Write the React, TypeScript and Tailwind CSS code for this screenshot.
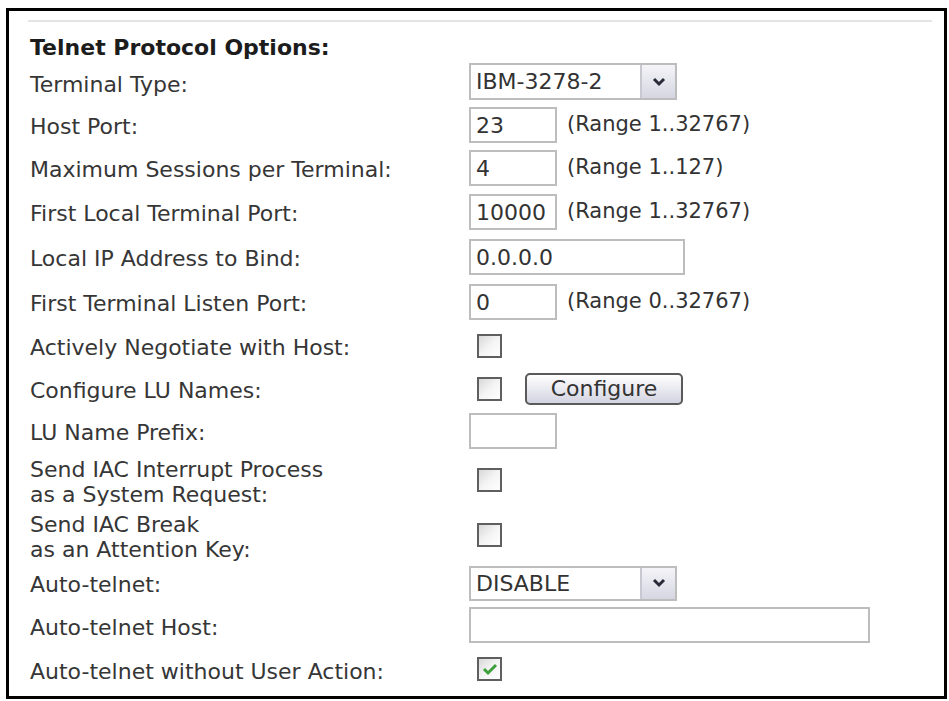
import React from 'react';

function Row({ h, label, children }: { h: string; label: React.ReactNode; children?: React.ReactNode }) {
  return (
    <div className={`flex items-center ${h}`}>
      <div className="w-[439px] shrink-0 pt-[3px] leading-[22px]">{label}</div>
      <div className="flex items-center">{children}</div>
    </div>
  );
}

function TwoLine({ a, b }: { a: string; b: string }) {
  return (
    <div className="leading-[25px]">
      <div>{a}</div>
      <div>{b}</div>
    </div>
  );
}

function TextBox({ w, value }: { w: string; value?: string }) {
  return (
    <div className={`${w} h-[36px] border-2 border-[#bdbdbd] bg-white px-[5px] flex items-center text-[22px] text-[#333]`}>
      {value}
    </div>
  );
}

function Range({ text }: { text: string }) {
  return <span className="ml-[10px] text-[21px] text-[#333]">{text}</span>;
}

function Select({ value, h }: { value: string; h: string }) {
  return (
    <div className={`w-[208px] ${h} border-2 border-[#bdbdbd] bg-white flex items-stretch`}>
      <div className="flex-1 flex items-center pl-[5px] text-[22px] text-[#333]">{value}</div>
      <div className="w-[35px] border-l-2 border-[#c8c8d0] bg-gradient-to-b from-[#f4f4f8] to-[#d6d6e2] flex items-center justify-center">
        <svg width="14" height="10" viewBox="0 0 14 10">
          <path d="M2 2 L7 7 L12 2" fill="none" stroke="#2a2a3a" strokeWidth="3" />
        </svg>
      </div>
    </div>
  );
}

function Check({ checked }: { checked?: boolean }) {
  return (
    <div className="ml-[8px] w-[25px] h-[24px] border-2 border-[#5f5f5f] bg-gradient-to-br from-[#d8d8d8] via-[#f4f4f4] to-white flex items-center justify-center">
      {checked && (
        <svg width="16" height="14" viewBox="0 0 16 14">
          <path d="M2 7 L6 11 L14 3" fill="none" stroke="#3da03d" strokeWidth="3" />
        </svg>
      )}
    </div>
  );
}

export default function App() {
  return (
    <div className="min-h-screen bg-white pt-[8px] pl-[6px] font-['DejaVu_Sans',sans-serif] text-[22px] text-[#363636]">
      <div className="w-[941px] h-[691px] border-[3px] border-black bg-white pl-[21px] pt-[9px]">
        <div className="ml-[-2px] w-[904px] h-[2px] bg-[#e4e4e4]" />
        <div className="mt-[13px] h-[25px] leading-[25px] font-bold text-[22px] text-[#1c1c1c]">
          Telnet Protocol Options:
        </div>
        <div className="mt-[2px]">
          <Row h="h-[42px]" label="Terminal Type:">
            <div className="-mt-[3px]">
              <Select value="IBM-3278-2" h="h-[37px]" />
            </div>
          </Row>
          <Row h="h-[42px]" label="Host Port:">
            <TextBox w="w-[88px]" value="23" />
            <Range text="(Range 1..32767)" />
          </Row>
          <Row h="h-[44px]" label="Maximum Sessions per Terminal:">
            <TextBox w="w-[88px]" value="4" />
            <Range text="(Range 1..127)" />
          </Row>
          <Row h="h-[44px]" label="First Local Terminal Port:">
            <TextBox w="w-[88px]" value="10000" />
            <Range text="(Range 1..32767)" />
          </Row>
          <Row h="h-[46px]" label="Local IP Address to Bind:">
            <TextBox w="w-[216px]" value="0.0.0.0" />
          </Row>
          <Row h="h-[44px]" label="First Terminal Listen Port:">
            <TextBox w="w-[88px]" value="0" />
            <Range text="(Range 0..32767)" />
          </Row>
          <Row h="h-[44px]" label="Actively Negotiate with Host:">
            <Check />
          </Row>
          <Row h="h-[42px]" label="Configure LU Names:">
            <Check />
            <button className="ml-[23px] w-[158px] h-[32px] border-2 border-[#5a5a5a] rounded-[5px] bg-gradient-to-b from-white to-[#d4d4e2] text-[#333] text-[22px] leading-none">
              Configure
            </button>
          </Row>
          <Row h="h-[42px]" label="LU Name Prefix:">
            <TextBox w="w-[88px]" />
          </Row>
          <Row h="h-[56px]" label={<TwoLine a="Send IAC Interrupt Process" b="as a System Request:" />}>
            <Check />
          </Row>
          <Row h="h-[54px]" label={<TwoLine a="Send IAC Break" b="as an Attention Key:" />}>
            <Check />
          </Row>
          <Row h="h-[42px]" label="Auto-telnet:">
            <Select value="DISABLE" h="h-[35px]" />
          </Row>
          <Row h="h-[44px]" label="Auto-telnet Host:">
            <div className="-mt-[3px]">
              <TextBox w="w-[401px]" />
            </div>
          </Row>
          <Row h="h-[44px]" label="Auto-telnet without User Action:">
            <div className="-mt-[3px]">
              <Check checked />
            </div>
          </Row>
        </div>
      </div>
    </div>
  );
}
